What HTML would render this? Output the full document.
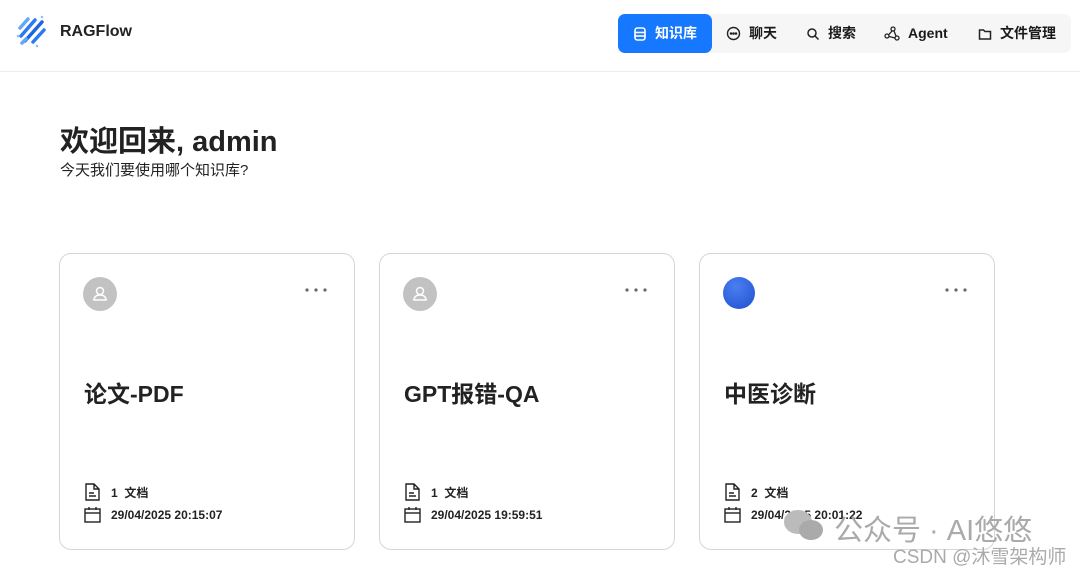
<!DOCTYPE html>
<html><head><meta charset="utf-8"><style>
*{box-sizing:border-box;margin:0;padding:0}
body{width:1080px;height:572px;overflow:hidden;background:#fff;font-family:"Liberation Sans","Noto Sans CJK SC",sans-serif;color:#1a1a1a;position:relative}
.hdr{position:absolute;left:0;top:0;width:1080px;height:72px;border-bottom:1px solid #ececec}
.logo{position:absolute;left:15px;top:14px}
.brand{position:absolute;left:60px;top:23px;font-size:16px;font-weight:bold;color:#222}
.nav{position:absolute;left:618px;top:14px;width:453px;height:39px;background:#f6f6f7;border-radius:7px}
.nav .it{position:absolute;top:0;height:39px;line-height:39px;font-size:14px;font-weight:bold;display:flex;align-items:center;gap:8px}
.nav .act{left:0;width:94px;background:#1677ff;color:#fff;border-radius:7px;justify-content:center}
h1{position:absolute;left:60px;top:118px;font-size:29px;font-weight:bold;color:#222}
.sub{position:absolute;left:60px;top:159px;font-size:15px;color:#222}
.card{position:absolute;top:253px;width:296px;height:297px;border:1px solid #d6d6d6;border-radius:12px}
.av{position:absolute;left:23px;top:23px;width:34px;height:34px;border-radius:50%;background:#c2c2c2}
.dots{position:absolute;left:245px;top:34px}
.title{position:absolute;left:24px;top:121px;font-size:23px;font-weight:bold;color:#222}
.row{position:absolute;left:24px;font-size:12px;font-weight:bold;display:flex;align-items:center;gap:10px;color:#222}
.wm{position:absolute;color:#aaa;white-space:nowrap}
</style></head><body>
<div class="hdr">
<svg class="logo" width="34" height="34" viewBox="0 0 34 34"><g stroke-linecap="round" stroke-width="3.5"><line x1="5" y1="14" x2="13" y2="5" stroke="#62a8f7"/><line x1="6" y1="22" x2="20" y2="6" stroke="#2b7bf0"/><line x1="10" y1="27" x2="27" y2="8" stroke="#1a66e6"/><line x1="18" y1="28" x2="29" y2="16" stroke="#2b7bf0"/><line x1="7" y1="29" x2="11" y2="25" stroke="#62a8f7"/></g><circle cx="3" cy="22" r="1.3" fill="#8cc0f7"/><circle cx="27" cy="3" r="1.3" fill="#8cc0f7"/><circle cx="22" cy="32" r="1.3" fill="#8cc0f7"/></svg>
<div class="brand">RAGFlow</div>
<div class="nav">
<div class="it act"><svg width="14" height="14" viewBox="0 0 14 14" fill="none" stroke="#fff" stroke-width="1.6"><rect x="2" y="1" width="10" height="12" rx="2.5"/><line x1="2" y1="5.5" x2="12" y2="5.5"/><line x1="2" y1="9" x2="12" y2="9"/></svg>知识库</div>
<div class="it" style="left:108px"><svg width="15" height="15" viewBox="0 0 15 15" fill="none" stroke="#222" stroke-width="1.4"><circle cx="7.5" cy="7.5" r="6"/><circle cx="5" cy="7.5" r=".6" fill="#222"/><circle cx="7.5" cy="7.5" r=".6" fill="#222"/><circle cx="10" cy="7.5" r=".6" fill="#222"/></svg>聊天</div>
<div class="it" style="left:188px"><svg width="14" height="14" viewBox="0 0 14 14" fill="none" stroke="#222" stroke-width="1.5"><circle cx="6" cy="6" r="4"/><line x1="9" y1="9" x2="12.5" y2="12.5"/></svg>搜索</div>
<div class="it" style="left:266px"><svg width="16" height="16" viewBox="0 0 16 16" fill="none" stroke="#222" stroke-width="1.3"><circle cx="9" cy="3" r="2"/><circle cx="3" cy="10" r="2"/><circle cx="13" cy="12" r="2"/><path d="M8 5L5 8.5M5 10.5L11 12M10 5L12 10"/></svg>Agent</div>
<div class="it" style="left:360px"><svg width="14" height="14" viewBox="0 0 14 14" fill="none" stroke="#222" stroke-width="1.5"><path d="M1.5 3h4l1.5 1.5h5.5v7.5h-11z"/></svg>文件管理</div>
</div>
</div>
<h1>欢迎回来, admin</h1>
<div class="sub">今天我们要使用哪个知识库?</div>

<div class="card" style="left:59px">
<div class="av"><svg width="34" height="34" viewBox="0 0 34 34" fill="none" stroke="#fff" stroke-width="1.5"><circle cx="17" cy="14" r="3.5"/><path d="M11 23c0-3.5 2.7-5 6-5s6 1.5 6 5z"/></svg></div>
<svg class="dots" width="24" height="4"><circle cx="2" cy="2" r="1.6" fill="#666"/><circle cx="11" cy="2" r="1.6" fill="#666"/><circle cx="20" cy="2" r="1.6" fill="#666"/></svg>
<div class="title">论文-PDF</div>
<div class="row" style="top:229px"><svg width="17" height="18" viewBox="0 0 17 18" fill="none" stroke="#222" stroke-width="1.4"><path d="M2 1h8l5 5v11H2z M10 1v5h5M5 10h5M5 13h7"/></svg>1&nbsp;&nbsp;文档</div>
<div class="row" style="top:252px"><svg width="17" height="17" viewBox="0 0 17 17" fill="none" stroke="#222" stroke-width="1.4"><rect x="1" y="3" width="15" height="13"/><line x1="1" y1="7" x2="16" y2="7"/><line x1="5" y1="1" x2="5" y2="4"/><line x1="12" y1="1" x2="12" y2="4"/></svg>29/04/2025 20:15:07</div>
</div>
<div class="card" style="left:379px">
<div class="av"><svg width="34" height="34" viewBox="0 0 34 34" fill="none" stroke="#fff" stroke-width="1.5"><circle cx="17" cy="14" r="3.5"/><path d="M11 23c0-3.5 2.7-5 6-5s6 1.5 6 5z"/></svg></div>
<svg class="dots" width="24" height="4"><circle cx="2" cy="2" r="1.6" fill="#666"/><circle cx="11" cy="2" r="1.6" fill="#666"/><circle cx="20" cy="2" r="1.6" fill="#666"/></svg>
<div class="title">GPT报错-QA</div>
<div class="row" style="top:229px"><svg width="17" height="18" viewBox="0 0 17 18" fill="none" stroke="#222" stroke-width="1.4"><path d="M2 1h8l5 5v11H2z M10 1v5h5M5 10h5M5 13h7"/></svg>1&nbsp;&nbsp;文档</div>
<div class="row" style="top:252px"><svg width="17" height="17" viewBox="0 0 17 17" fill="none" stroke="#222" stroke-width="1.4"><rect x="1" y="3" width="15" height="13"/><line x1="1" y1="7" x2="16" y2="7"/><line x1="5" y1="1" x2="5" y2="4"/><line x1="12" y1="1" x2="12" y2="4"/></svg>29/04/2025 19:59:51</div>
</div>
<div class="card" style="left:699px">
<div class="av" style="width:32px;height:32px;background:radial-gradient(circle at 40% 30%,#4a7ff0,#1f4fd0)"></div>
<svg class="dots" width="24" height="4"><circle cx="2" cy="2" r="1.6" fill="#666"/><circle cx="11" cy="2" r="1.6" fill="#666"/><circle cx="20" cy="2" r="1.6" fill="#666"/></svg>
<div class="title">中医诊断</div>
<div class="row" style="top:229px"><svg width="17" height="18" viewBox="0 0 17 18" fill="none" stroke="#222" stroke-width="1.4"><path d="M2 1h8l5 5v11H2z M10 1v5h5M5 10h5M5 13h7"/></svg>2&nbsp;&nbsp;文档</div>
<div class="row" style="top:252px"><svg width="17" height="17" viewBox="0 0 17 17" fill="none" stroke="#222" stroke-width="1.4"><rect x="1" y="3" width="15" height="13"/><line x1="1" y1="7" x2="16" y2="7"/><line x1="5" y1="1" x2="5" y2="4"/><line x1="12" y1="1" x2="12" y2="4"/></svg>29/04/2025 20:01:22</div>
</div>
<svg style="position:absolute;left:782px;top:508px" width="44" height="36" viewBox="0 0 44 36"><ellipse cx="16" cy="14" rx="14" ry="12" fill="#bbb"/><ellipse cx="29" cy="22" rx="12" ry="10" fill="#aaa"/></svg>
<div class="wm" style="left:834px;top:507px;font-size:29px">公众号 · AI悠悠</div>
<div class="wm" style="left:893px;top:542px;font-size:19px">CSDN @沐雪架构师</div>
</body></html>
